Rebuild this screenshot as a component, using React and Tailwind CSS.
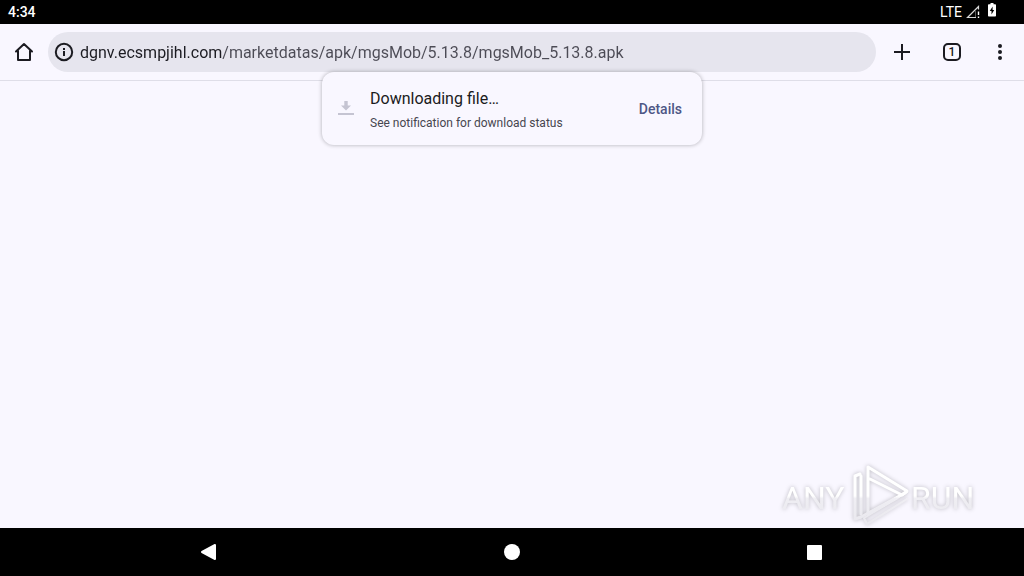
import React from "react";

function StatusBar() {
  return (
    <header className="flex h-6 shrink-0 items-center justify-between bg-black pr-7 pl-2 text-sm text-white">
      <time className="font-medium">4:34</time>
      <div className="flex items-center gap-1">
        <span>LTE</span>
        <svg className="h-3.5 w-3.5" viewBox="0 0 14 14" fill="none" aria-hidden="true">
          <path d="M10 12.500H1.500L12.500 1.500V4.500" stroke="#d8d8d8" strokeWidth="1.2" />
          <path d="M9.500 5V12" stroke="#555" strokeWidth="1" />
          <path d="M12.500 6.500V10M12.500 11.500V13" stroke="#fff" strokeWidth="1.4" />
        </svg>
        <svg className="mb-1 ml-1 h-3.5 w-2" viewBox="0 0 8 14" aria-hidden="true">
          <path d="M2.500 0h3v1.300H7.200c.5 0 .8.3.8.8v10.600c0 .5-.3.8-.8.8H.8c-.5 0-.8-.3-.8-.8V2.100c0-.5.3-.8.8-.8h1.700z" fill="#fff" />
          <path d="M4.600 3.500L1.800 8h1.700v3.500L6.200 7H4.600z" fill="#000" />
        </svg>
      </div>
    </header>
  );
}

function Toolbar() {
  return (
    <div className="flex h-[57px] shrink-0 items-center border-b border-[#dfdee8] text-[#1b1b21]">
      <button type="button" aria-label="Home" className="flex h-12 w-12 items-center justify-center">
        <svg className="h-6 w-6" viewBox="0 0 24 24" fill="none" stroke="currentColor" strokeWidth="2" strokeLinejoin="round" strokeLinecap="round" aria-hidden="true">
          <path d="M4 11.500L12 4l8 7.500M6 10.500V20h12v-9.500" />
        </svg>
      </button>
      <div className="flex h-10 flex-1 items-center rounded-full bg-[#e6e5ee]">
        <button type="button" aria-label="Site information" className="flex h-8 w-8 items-center justify-center">
          <svg className="h-5 w-5" viewBox="0 0 20 20" fill="none" aria-hidden="true">
            <circle cx="10" cy="10" r="8.200" stroke="currentColor" strokeWidth="2" />
            <path d="M10 9v5M10 6v2" stroke="currentColor" strokeWidth="2" />
          </svg>
        </button>
        <input
          type="text"
          aria-label="Web address"
          defaultValue="dgnv.ecsmpjihl.com/marketdatas/apk/mgsMob/5.13.8/mgsMob_5.13.8.apk"
          className="h-10 min-w-0 flex-1 bg-[linear-gradient(to_right,#1b1b21_142px,#4c4b55_142px)] bg-clip-text text-base text-transparent outline-none"
        />
      </div>
      <div className="flex items-center pl-0.5">
        <button type="button" aria-label="New tab" className="flex h-12 w-12 items-center justify-center">
          <svg className="h-6 w-6" viewBox="0 0 24 24" stroke="currentColor" strokeWidth="2" aria-hidden="true">
            <path d="M4 12h16M12 4v16" />
          </svg>
        </button>
        <button type="button" aria-label="Switch tabs" className="flex h-12 w-[52px] items-center justify-center">
          <span className="flex h-[18px] w-[18px] items-center justify-center rounded-[5px] border-2 border-current text-xs leading-none font-medium">
            1
          </span>
        </button>
        <button type="button" aria-label="Menu" className="flex h-12 w-[46px] items-center justify-start pl-[10px]">
          <svg className="h-6 w-6" viewBox="0 0 24 24" fill="currentColor" aria-hidden="true">
            <circle cx="12" cy="6" r="2" />
            <circle cx="12" cy="12" r="2" />
            <circle cx="12" cy="18" r="2" />
          </svg>
        </button>
      </div>
    </div>
  );
}

function DownloadMessage() {
  return (
    <div
      role="status"
      className="absolute -top-[9px] left-1/2 flex h-[73px] w-[380px] -translate-x-1/2 items-center rounded-xl bg-[#f9f7ff] pr-5 pl-4 shadow-[0_0_4px_rgba(0,0,0,0.3)]"
    >
      <svg className="h-4 w-4 shrink-0" viewBox="0 0 16 16" fill="#c5c4d2" aria-hidden="true">
        <path d="M6.300 0h3.400v4.500H13L8 9.500 3 4.500h3.300zM0 12h16v2H0z" />
      </svg>
      <div className="flex-1 pt-0.5 pl-4">
        <p className="text-base leading-6 text-[#1b1b21]">Downloading file…</p>
        <p className="pt-0.5 text-xs leading-5 text-[#47464f]">See notification for download status</p>
      </div>
      <button type="button" className="text-sm font-medium text-[#4f5786]">
        Details
      </button>
    </div>
  );
}

function Watermark() {
  return (
    <div className="absolute right-12 bottom-0 h-16 w-[196px]">
      <svg className="h-full w-full overflow-visible drop-shadow-[0_0_2px_rgba(0,0,0,0.25)]" viewBox="0 0 196 64" role="img" aria-label="ANY RUN">
        <defs>
          <linearGradient id="fade" x1="0" y1="0" x2="0" y2="64" gradientUnits="userSpaceOnUse">
            <stop offset="0.5" stopColor="#ffffff" />
            <stop offset="0.54" stopColor="#efeef3" />
            <stop offset="1" stopColor="#e8e7ed" />
          </linearGradient>
        </defs>
        <g fill="url(#fade)" fontFamily="Roboto, sans-serif" fontSize="32">
          <text x="2" y="45">ANY</text>
          <text x="131" y="45">RUN</text>
        </g>
        <g fill="none" stroke="url(#fade)" strokeWidth="3" strokeLinejoin="round" strokeLinecap="round">
          <path d="M80 10L75 12V55L81 53L125 29" />
          <path d="M81 50V12M88 50V3L127 27L122 31L90 15M88 50L117 34" />
          <path d="M127 28L84 54L87 60L127 35" strokeWidth="2" />
        </g>
      </svg>
    </div>
  );
}

function NavigationBar() {
  return (
    <nav aria-label="System navigation" className="flex h-12 shrink-0 items-center justify-around bg-black px-[58px] text-white">
      <button type="button" aria-label="Back" className="flex h-12 w-12 items-center justify-center">
        <svg className="h-6 w-6" viewBox="0 0 24 24" fill="currentColor" stroke="currentColor" strokeWidth="2" strokeLinejoin="round" aria-hidden="true">
          <path d="M5 12L18 5v14z" />
        </svg>
      </button>
      <button type="button" aria-label="Home screen" className="flex h-12 w-12 items-center justify-center">
        <span className="h-4 w-4 rounded-full bg-white" />
      </button>
      <button type="button" aria-label="Recent apps" className="flex h-12 w-12 items-center justify-center">
        <span className="h-[15px] w-[15px] rounded-[1px] bg-white" />
      </button>
    </nav>
  );
}

export default function App() {
  return (
    <div className="flex min-h-screen flex-col bg-[#f9f7ff] font-['Roboto',sans-serif]">
      <StatusBar />
      <Toolbar />
      <main className="relative flex-1">
        <DownloadMessage />
        <Watermark />
      </main>
      <NavigationBar />
    </div>
  );
}
